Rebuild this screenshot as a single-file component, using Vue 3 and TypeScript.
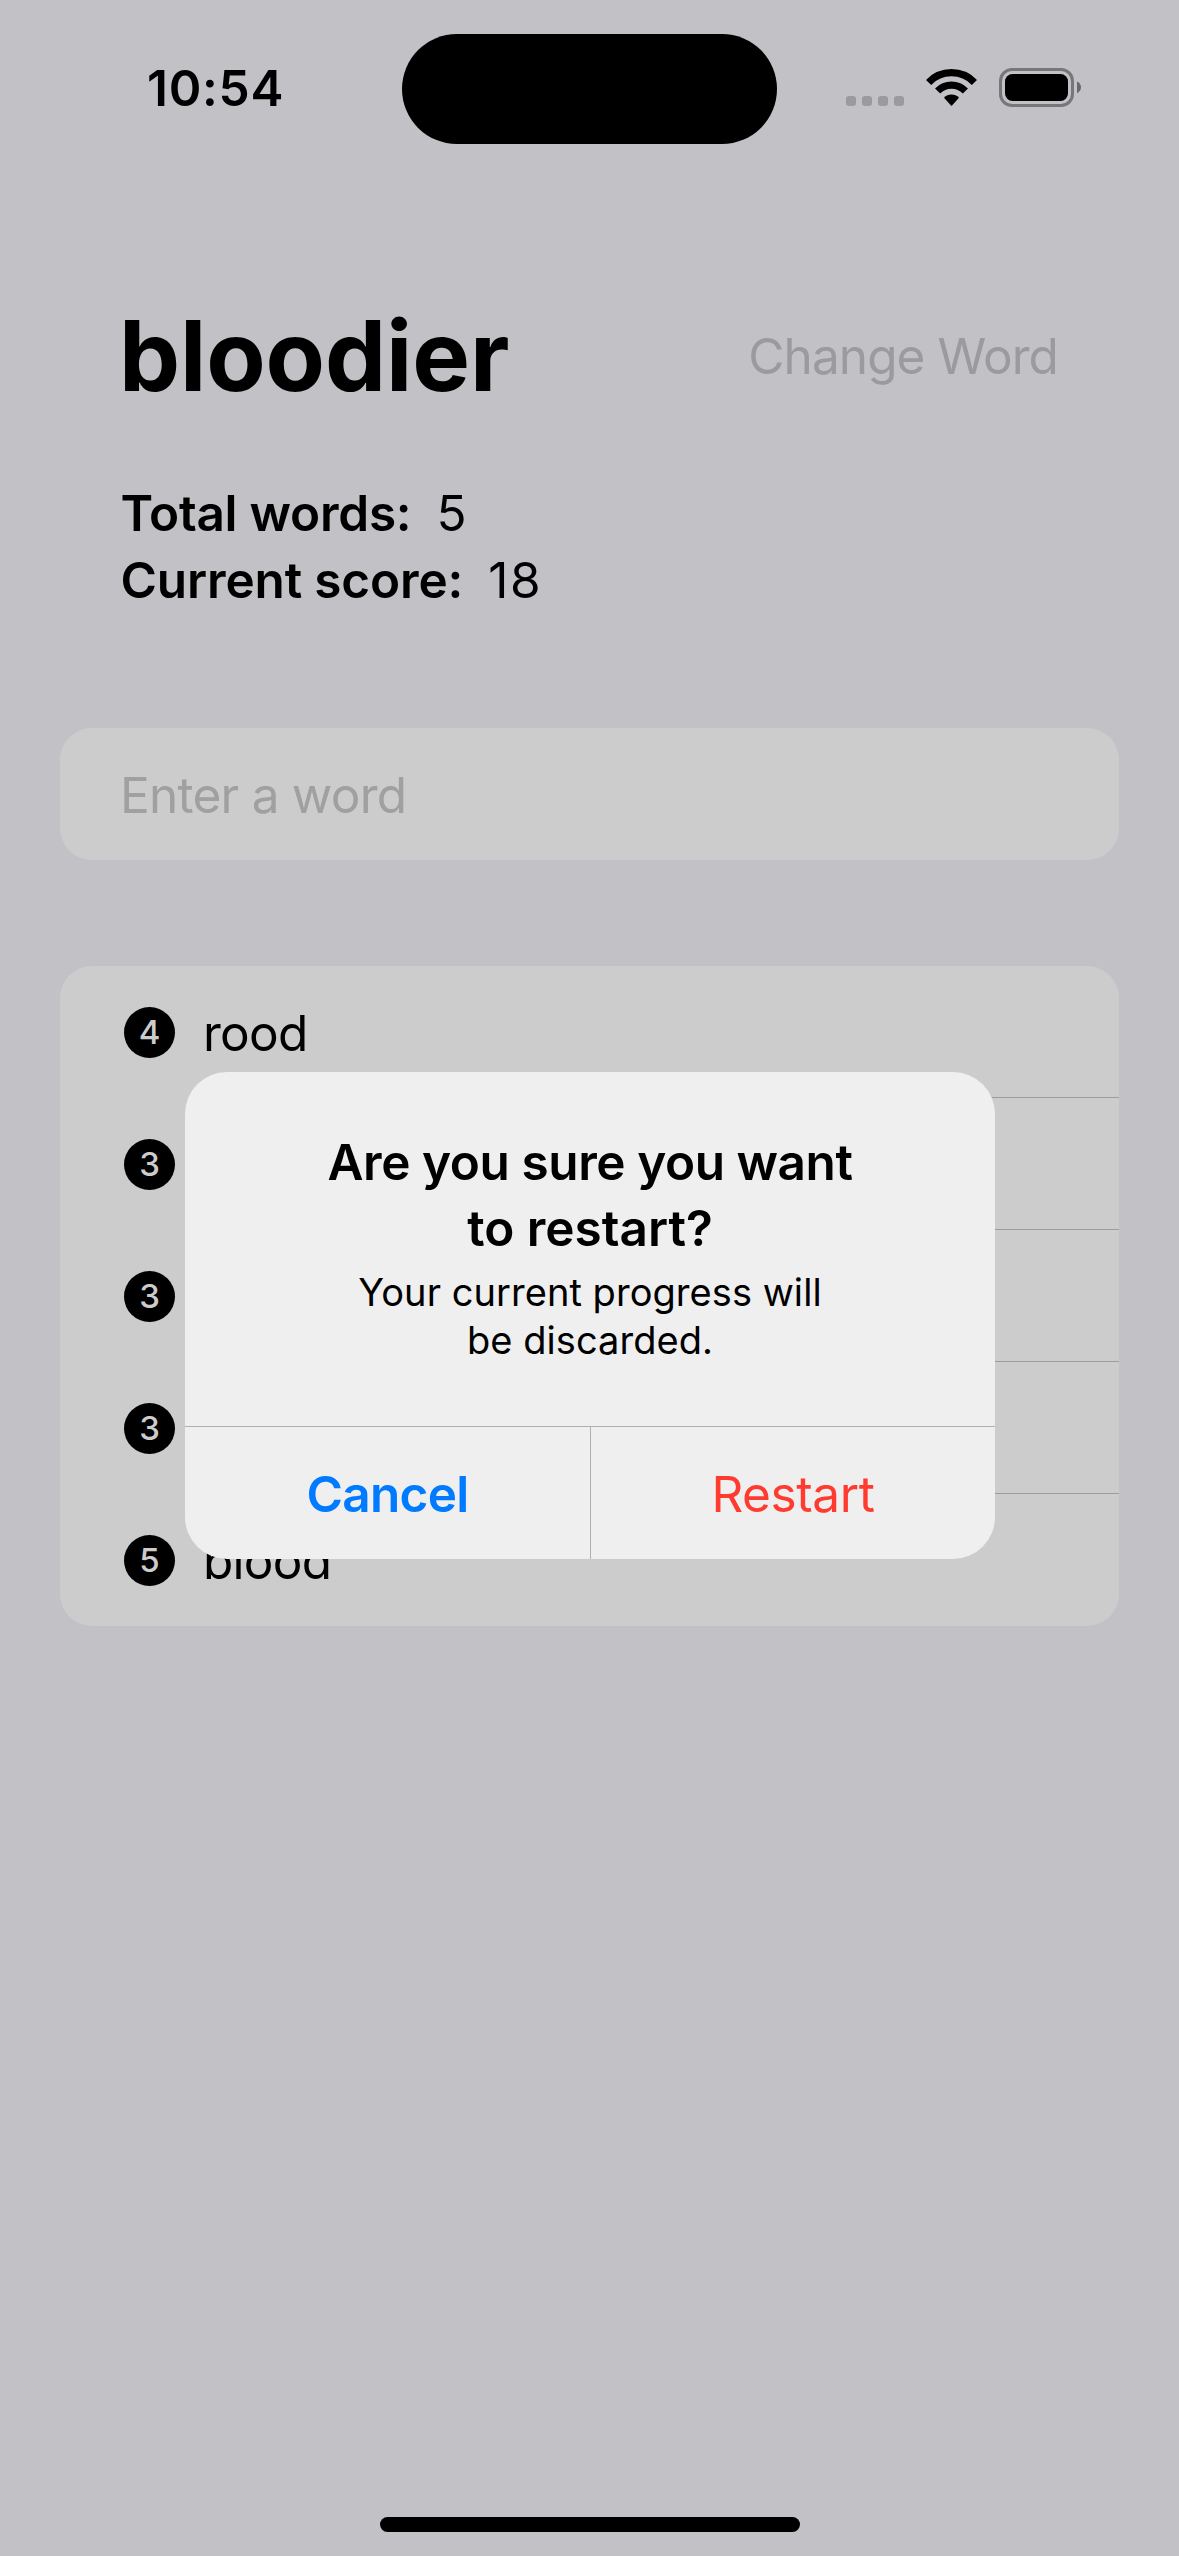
<script setup lang="ts">
interface Entry {
  id: number
  word: string
}

const rootWord = 'bloodier'
const entries: Entry[] = [
  { id: 1, word: 'rood' },
  { id: 2, word: 'rod' },
  { id: 3, word: 'red' },
  { id: 4, word: 'old' },
  { id: 5, word: 'blood' },
]
const score = entries.reduce((sum, entry) => sum + entry.word.length, 0)
</script>

<template>
  <div class="screen">
    <header class="status">
      <span class="time">10:54</span>
      <div class="island"></div>
      <div class="indicators">
        <div class="dots"><i v-for="n in 4" :key="n"></i></div>
        <svg class="wifi" width="51" height="38" viewBox="0 0 51 38">
          <path d="M2.6 13.4A31.8 31.8 0 0 1 48.4 13.4M11.6 22A19.4 19.4 0 0 1 39.4 22" fill="none" stroke="#000" stroke-width="7.2" />
          <path d="M18 28.8A10.2 10.2 0 0 1 33 28.8L26 36.5Q25.5 37 25 36.5Z" />
        </svg>
        <svg class="battery" width="83" height="39" viewBox="0 0 83 39">
          <rect x="1.5" y="1.5" width="72" height="36" rx="11.5" fill="none" stroke="#77777a" stroke-width="3" />
          <rect x="6" y="6" width="63" height="27" rx="7.5" />
          <path d="M78 13.5Q82 15.5 82 19.3T78 25.2Z" fill="#69696b" />
        </svg>
      </div>
    </header>

    <main class="content">
      <div class="heading">
        <h1>{{ rootWord }}</h1>
        <span class="change">Change Word</span>
      </div>
      <dl class="stats">
        <div><dt class="total">Total words:</dt><dd>{{ entries.length }}</dd></div>
        <div><dt class="current">Current score:</dt><dd>{{ score }}</dd></div>
      </dl>
      <div class="card field">Enter a word</div>
      <ul class="card list">
        <li v-for="entry in entries" :key="entry.id">
          <span class="badge">{{ entry.word.length }}</span>
          <span class="word">{{ entry.word }}</span>
        </li>
      </ul>
    </main>

    <div class="home"></div>

    <section class="alert" role="alertdialog">
      <div class="message">
        <h2><span class="question">Are you sure you want</span><br />to restart?</h2>
        <p>Your current progress will<br />be discarded.</p>
      </div>
      <div class="actions">
        <button class="cancel" type="button">Cancel</button>
        <button class="restart" type="button">Restart</button>
      </div>
    </section>
  </div>
</template>

<style>
body {
  background: #c2c1c6;
}
</style>

<style scoped>
.screen {
  position: relative;
  display: flex;
  flex-direction: column;
  width: 1179px;
  height: 2556px;
  box-sizing: border-box;
  padding-bottom: 24px;
  overflow: hidden;
  background: #c2c1c6;
  color: #000;
  font-family: Inter, "Liberation Sans", sans-serif;
  font-size: 49.5px;
  line-height: 66px;
}

.status {
  display: grid;
  grid-template-columns: 402px 375px 402px;
  align-items: center;
  height: 110px;
  padding-top: 34px;
}
.time {
  padding-left: 147px;
  padding-bottom: 2px;
  font-weight: 600;
  letter-spacing: 0.75px;
}
.island {
  height: 110px;
  border-radius: 55px;
  background: #000;
}
.indicators {
  display: flex;
  align-items: center;
  height: 39px;
  padding-left: 69px;
  margin-top: -3px;
}
.dots {
  display: flex;
  gap: 6px;
  align-self: flex-end;
  margin-bottom: 1px;
}
.dots i {
  width: 10px;
  height: 10px;
  border-radius: 3px;
  background: #9b9b9e;
}
.wifi {
  margin-left: 22px;
}
.battery {
  margin-left: 22px;
}

.content {
  padding: 152px 60px 0;
}
.heading {
  display: flex;
  align-items: center;
  justify-content: space-between;
  height: 120px;
  padding: 0 61px 0 59px;
}
h1 {
  margin: 0;
  font-size: 97px;
  font-weight: 700;
  line-height: 120px;
  letter-spacing: -0.1px;
}
.change {
  color: #9b9b9e;
  letter-spacing: -0.91px;
}
.stats {
  margin: 64px 0 0;
  padding-left: 60.5px;
}
.stats div {
  display: flex;
  height: 67px;
  line-height: 67px;
}
dt {
  font-weight: 600;
}
.total {
  letter-spacing: -0.25px;
}
.current {
  letter-spacing: -0.15px;
}
dd {
  margin: 0 0 0 25px;
  letter-spacing: 1.8px;
}
.card {
  border-radius: 32px;
  background: #ccc;
}
.field {
  height: 132px;
  margin-top: 114px;
  padding-left: 60px;
  box-sizing: border-box;
  line-height: 134px;
  letter-spacing: -0.75px;
  color: #a0a0a0;
}
.list {
  margin: 106px 0 0;
  padding: 0;
  list-style: none;
}
.list li {
  position: relative;
  display: flex;
  align-items: center;
  height: 132px;
  padding-left: 64px;
}
.list li:not(:last-child)::after {
  content: "";
  position: absolute;
  left: 143px;
  right: 0;
  bottom: 0;
  height: 1px;
  background: #9d9d9e;
}
.badge {
  width: 51px;
  height: 51px;
  border-radius: 50%;
  background: #000;
  color: #ccc;
  font-size: 33px;
  font-weight: 500;
  line-height: 51px;
  text-align: center;
}
.word {
  margin-left: 28px;
  padding-top: 2px;
  letter-spacing: -0.72px;
}

.home {
  width: 420px;
  height: 15px;
  margin: auto auto 0;
  border-radius: 8px;
  background: #000;
}

.alert {
  position: absolute;
  left: 185px;
  top: 1072px;
  width: 810px;
  height: 487px;
  display: flex;
  flex-direction: column;
  border-radius: 42px;
  overflow: hidden;
  background: #efefef;
  text-align: center;
}
.message {
  flex: 1;
  padding-top: 57px;
}
h2 {
  margin: 0;
  font-size: 49.5px;
  font-weight: 600;
  line-height: 66px;
}
.question {
  letter-spacing: -0.43px;
}
p {
  margin: 7px 0 0;
  font-size: 38px;
  line-height: 48px;
  letter-spacing: 0.05px;
}
.actions {
  display: grid;
  grid-template-columns: 405px 1fr;
  height: 132px;
  border-top: 1px solid #b0b0b1;
}
button {
  border: 0;
  margin: 0;
  padding: 2px 0 0;
  background: none;
  font: inherit;
}
.cancel {
  color: #007aff;
  font-weight: 600;
  letter-spacing: -0.72px;
}
.restart {
  border-left: 1px solid #b0b0b1;
  color: #ff3b30;
  letter-spacing: -0.39px;
}
</style>
